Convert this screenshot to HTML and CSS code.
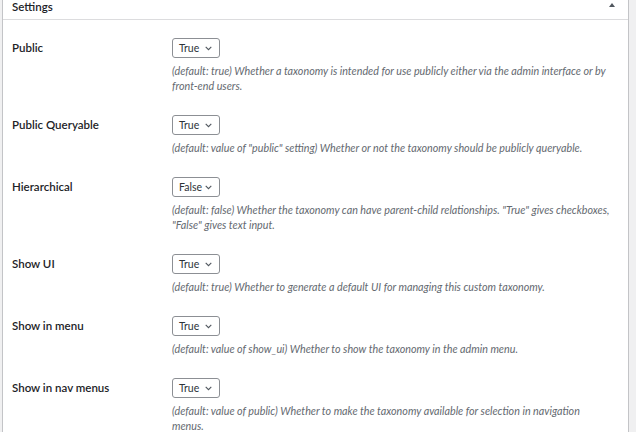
FILE: index.html
```html
<!DOCTYPE html>
<html>
<head>
<meta charset="utf-8">
<link rel="stylesheet" href="styles.css">
</head>
<body>
<div class="postbox">
  <div class="postbox-header">
    <h2 class="hndle">Settings</h2>
    <span class="toggle"></span>
  </div>
  <div class="inside">
    <div class="row">
      <div class="label">Public</div>
      <div class="field">
        <div class="select"><span>True</span><svg width="7" height="5" viewBox="0 0 7 5"><path d="M0.7 0.9l2.8 2.8L6.3 0.9" fill="none" stroke="#50575e" stroke-width="1.1"/></svg></div>
        <p class="desc">(default: true) Whether a taxonomy is intended for use publicly either via the admin interface or by front-end users.</p>
      </div>
    </div>
    <div class="row">
      <div class="label">Public Queryable</div>
      <div class="field">
        <div class="select"><span>True</span><svg width="7" height="5" viewBox="0 0 7 5"><path d="M0.7 0.9l2.8 2.8L6.3 0.9" fill="none" stroke="#50575e" stroke-width="1.1"/></svg></div>
        <p class="desc">(default: value of "public" setting) Whether or not the taxonomy should be publicly queryable.</p>
      </div>
    </div>
    <div class="row">
      <div class="label">Hierarchical</div>
      <div class="field">
        <div class="select"><span>False</span><svg width="7" height="5" viewBox="0 0 7 5"><path d="M0.7 0.9l2.8 2.8L6.3 0.9" fill="none" stroke="#50575e" stroke-width="1.1"/></svg></div>
        <p class="desc">(default: false) Whether the taxonomy can have parent-child relationships. "True" gives checkboxes, "False" gives text input.</p>
      </div>
    </div>
    <div class="row">
      <div class="label">Show UI</div>
      <div class="field">
        <div class="select"><span>True</span><svg width="7" height="5" viewBox="0 0 7 5"><path d="M0.7 0.9l2.8 2.8L6.3 0.9" fill="none" stroke="#50575e" stroke-width="1.1"/></svg></div>
        <p class="desc">(default: true) Whether to generate a default UI for managing this custom taxonomy.</p>
      </div>
    </div>
    <div class="row">
      <div class="label">Show in menu</div>
      <div class="field">
        <div class="select"><span>True</span><svg width="7" height="5" viewBox="0 0 7 5"><path d="M0.7 0.9l2.8 2.8L6.3 0.9" fill="none" stroke="#50575e" stroke-width="1.1"/></svg></div>
        <p class="desc">(default: value of show_ui) Whether to show the taxonomy in the admin menu.</p>
      </div>
    </div>
    <div class="row">
      <div class="label">Show in nav menus</div>
      <div class="field">
        <div class="select"><span>True</span><svg width="7" height="5" viewBox="0 0 7 5"><path d="M0.7 0.9l2.8 2.8L6.3 0.9" fill="none" stroke="#50575e" stroke-width="1.1"/></svg></div>
        <p class="desc">(default: value of public) Whether to make the taxonomy available for selection in navigation<br>menus.</p>
      </div>
    </div>
  </div>
</div>
</body>
</html>
```

FILE: styles.css
```css
html, body {
  margin: 0;
  padding: 0;
  background: #f0f0f1;
  font-family: "Lato", "Noto Sans", sans-serif;
  color: #1d2327;
}
body {
  padding: 0 7px 0 2px;
  height: 432px;
  overflow: hidden;
}
.postbox {
  background: #fff;
  border: 1px solid #c3c4c7;
  border-top: none;
}
.postbox-header {
  display: flex;
  justify-content: space-between;
  align-items: flex-start;
  height: 19px;
  border-bottom: 1px solid #dcdcde;
  padding: 0 13px 0 9px;
}
.hndle {
  margin: 0;
  font-size: 11.5px;
  line-height: 13px;
  font-weight: 600;
}
.toggle {
  margin-top: 3px;
  width: 0;
  height: 0;
  border-left: 3px solid transparent;
  border-right: 3px solid transparent;
  border-bottom: 4px solid #50575e;
}
.inside {
  padding: 7px 6px 0 9px;
}
.row {
  display: flex;
  padding: 11px 0;
}
.label {
  width: 160px;
  flex: none;
  font-size: 11.5px;
  font-weight: 600;
  line-height: 20px;
}
.field {
  flex: 1;
  line-height: 0;
}
.select {
  box-sizing: border-box;
  display: inline-flex;
  align-items: center;
  justify-content: space-between;
  width: 48px;
  height: 20px;
  line-height: 18px;
  padding: 0 7px 0 6px;
  border: 1px solid #8c8f94;
  border-radius: 3px;
  font-size: 10.5px;
  color: #2c3338;
  background: #fff;
  vertical-align: top;
}
.desc {
  margin: 5px 0 0 0;
  font-size: 10.75px;
  line-height: 15px;
  font-style: italic;
  color: #646970;
}
```
